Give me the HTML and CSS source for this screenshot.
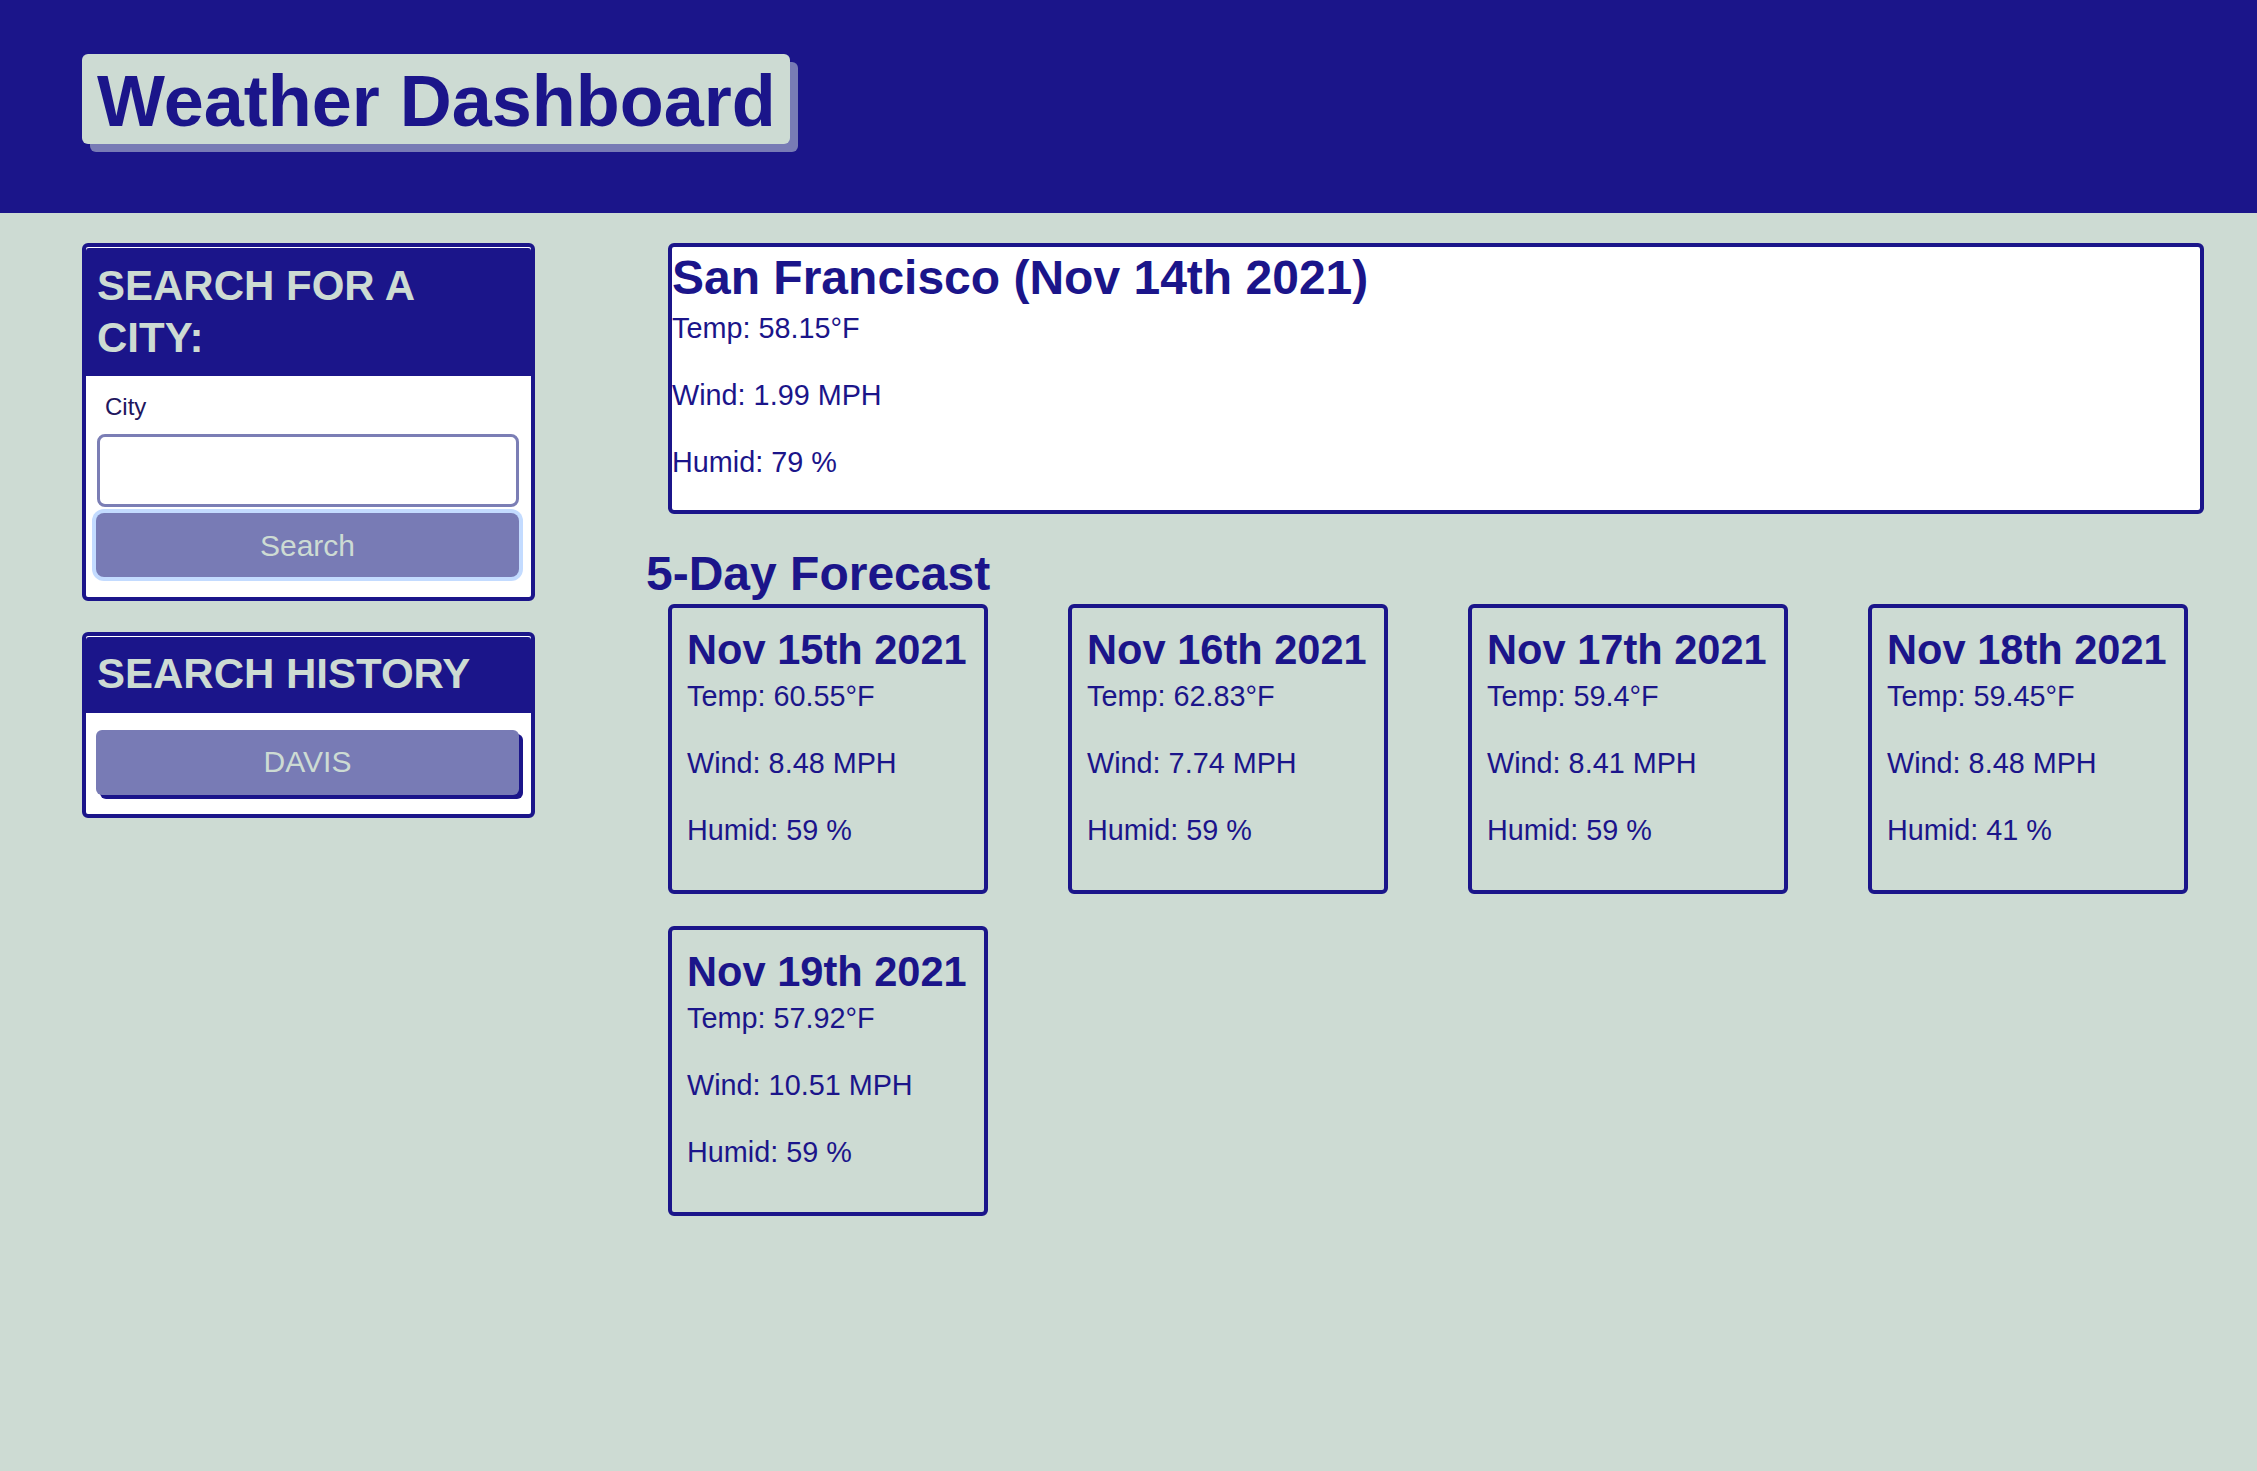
FILE: index.html
```html
<!DOCTYPE html>
<html lang="en">
<head>
<meta charset="utf-8">
<title>Weather Dashboard</title>
<link rel="stylesheet" href="styles.css">
</head>
<body>
<header class="top-bar">
  <h1 class="title">Weather Dashboard</h1>
</header>
<main class="layout">
  <aside class="sidebar">
    <div class="panel">
      <h2 class="panel-head">SEARCH FOR A CITY:</h2>
      <div class="panel-body search-body">
        <label class="city-label" for="city">City</label>
        <input class="city-input" id="city" type="text">
        <button class="search-btn" type="button">Search</button>
      </div>
    </div>
    <div class="panel panel-history">
      <h2 class="panel-head">SEARCH HISTORY</h2>
      <div class="panel-body history-body">
        <button class="history-btn" type="button">DAVIS</button>
      </div>
    </div>
  </aside>
  <section class="content">
    <div class="current">
      <h2 class="current-title">San Francisco (Nov 14th 2021)</h2>
      <p class="stat">Temp: 58.15°F</p>
      <p class="stat">Wind: 1.99 MPH</p>
      <p class="stat">Humid: 79 %</p>
    </div>
    <h2 class="forecast-title">5-Day Forecast</h2>
    <div class="forecast-row">
      <div class="day">
        <h3 class="day-title">Nov 15th 2021</h3>
        <p class="stat">Temp: 60.55°F</p>
        <p class="stat">Wind: 8.48 MPH</p>
        <p class="stat">Humid: 59 %</p>
      </div>
      <div class="day">
        <h3 class="day-title">Nov 16th 2021</h3>
        <p class="stat">Temp: 62.83°F</p>
        <p class="stat">Wind: 7.74 MPH</p>
        <p class="stat">Humid: 59 %</p>
      </div>
      <div class="day">
        <h3 class="day-title">Nov 17th 2021</h3>
        <p class="stat">Temp: 59.4°F</p>
        <p class="stat">Wind: 8.41 MPH</p>
        <p class="stat">Humid: 59 %</p>
      </div>
      <div class="day">
        <h3 class="day-title">Nov 18th 2021</h3>
        <p class="stat">Temp: 59.45°F</p>
        <p class="stat">Wind: 8.48 MPH</p>
        <p class="stat">Humid: 41 %</p>
      </div>
      <div class="day">
        <h3 class="day-title">Nov 19th 2021</h3>
        <p class="stat">Temp: 57.92°F</p>
        <p class="stat">Wind: 10.51 MPH</p>
        <p class="stat">Humid: 59 %</p>
      </div>
    </div>
  </section>
</main>
</body>
</html>
```
FILE: styles.css
```css
* {
  box-sizing: border-box;
}

body {
  margin: 0;
  background: #cddbd3;
  color: #1b158a;
  font-family: "Liberation Sans", Arial, sans-serif;
}

.top-bar {
  background: #1b158a;
  padding: 54px 82px 69px;
}

.title {
  display: inline-block;
  margin: 0;
  padding: 5px 14px 1px 15px;
  font-size: 72px;
  line-height: 84px;
  font-weight: 700;
  color: #1b158a;
  background: #cddbd3;
  border-radius: 6px;
  box-shadow: 8px 8px 0 #787bb5;
}

.layout {
  display: flex;
  align-items: flex-start;
  padding: 30px 53px 0 82px;
}

.sidebar {
  width: 453px;
  flex-shrink: 0;
}

.panel {
  background: #fff;
  border: 4px solid #1b158a;
  border-radius: 6px;
}

.panel-history {
  margin-top: 31px;
}

.panel-head {
  margin: 1px 0 0;
  padding: 12px 10px 12px 11px;
  background: #1b158a;
  color: #cddbd3;
  font-size: 42px;
  line-height: 52px;
  font-weight: 700;
  border-radius: 3px 3px 0 0;
}

.panel-history .panel-head {
  padding: 11px 10px 13px 11px;
}

.search-body {
  padding: 13px 12px 20px 10px;
}

.city-label {
  display: block;
  padding-left: 9px;
  font-size: 24px;
  line-height: 36px;
  color: #21165e;
}

.city-input {
  display: block;
  width: calc(100% - 1px);
  height: 73px;
  margin: 9px 0 0 1px;
  border: 3px solid #7b7eb5;
  border-radius: 8px;
  background: #fff;
  font-family: inherit;
  font-size: 24px;
  padding: 0 12px;
}

.search-btn,
.history-btn {
  display: block;
  width: 100%;
  border: none;
  border-radius: 8px;
  background: #787bb5;
  color: #cddbd3;
  font-family: inherit;
  font-size: 30px;
  line-height: 45px;
  text-align: center;
}

.search-btn {
  height: 64px;
  margin-top: 6px;
  padding: 10px 0 9px;
  box-shadow: 0 0 0 4px #c3dbff;
}

.history-body {
  padding: 17px 12px 19px 10px;
}

.history-btn {
  height: 65px;
  padding: 9px 0 11px;
  border-radius: 6px;
  box-shadow: 4px 4px 0 #1b158a;
}

.content {
  flex: 1;
  margin-left: 111px;
  min-width: 0;
}

.current {
  margin-left: 22px;
  background: #fff;
  border: 4px solid #1b158a;
  border-radius: 6px;
}

.current-title {
  margin: 0;
  font-size: 48px;
  line-height: 62px;
  font-weight: 700;
}

.stat {
  margin: 28px 0;
  font-size: 28.8px;
  line-height: 39px;
}

.current-title + .stat,
.day-title + .stat {
  margin-top: 0;
}

.forecast-title {
  margin: 32px 0 3px;
  font-size: 48px;
  line-height: 55px;
  font-weight: 700;
}

.forecast-row {
  display: flex;
  flex-wrap: wrap;
  column-gap: 80px;
  row-gap: 32px;
  padding-left: 22px;
}

.day {
  width: 320px;
  padding: 14px 14px 12px 15px;
  border: 4px solid #1b158a;
  border-radius: 6px;
}

.day-title {
  margin: 0;
  font-size: 41.6px;
  line-height: 55px;
  font-weight: 700;
}
```
